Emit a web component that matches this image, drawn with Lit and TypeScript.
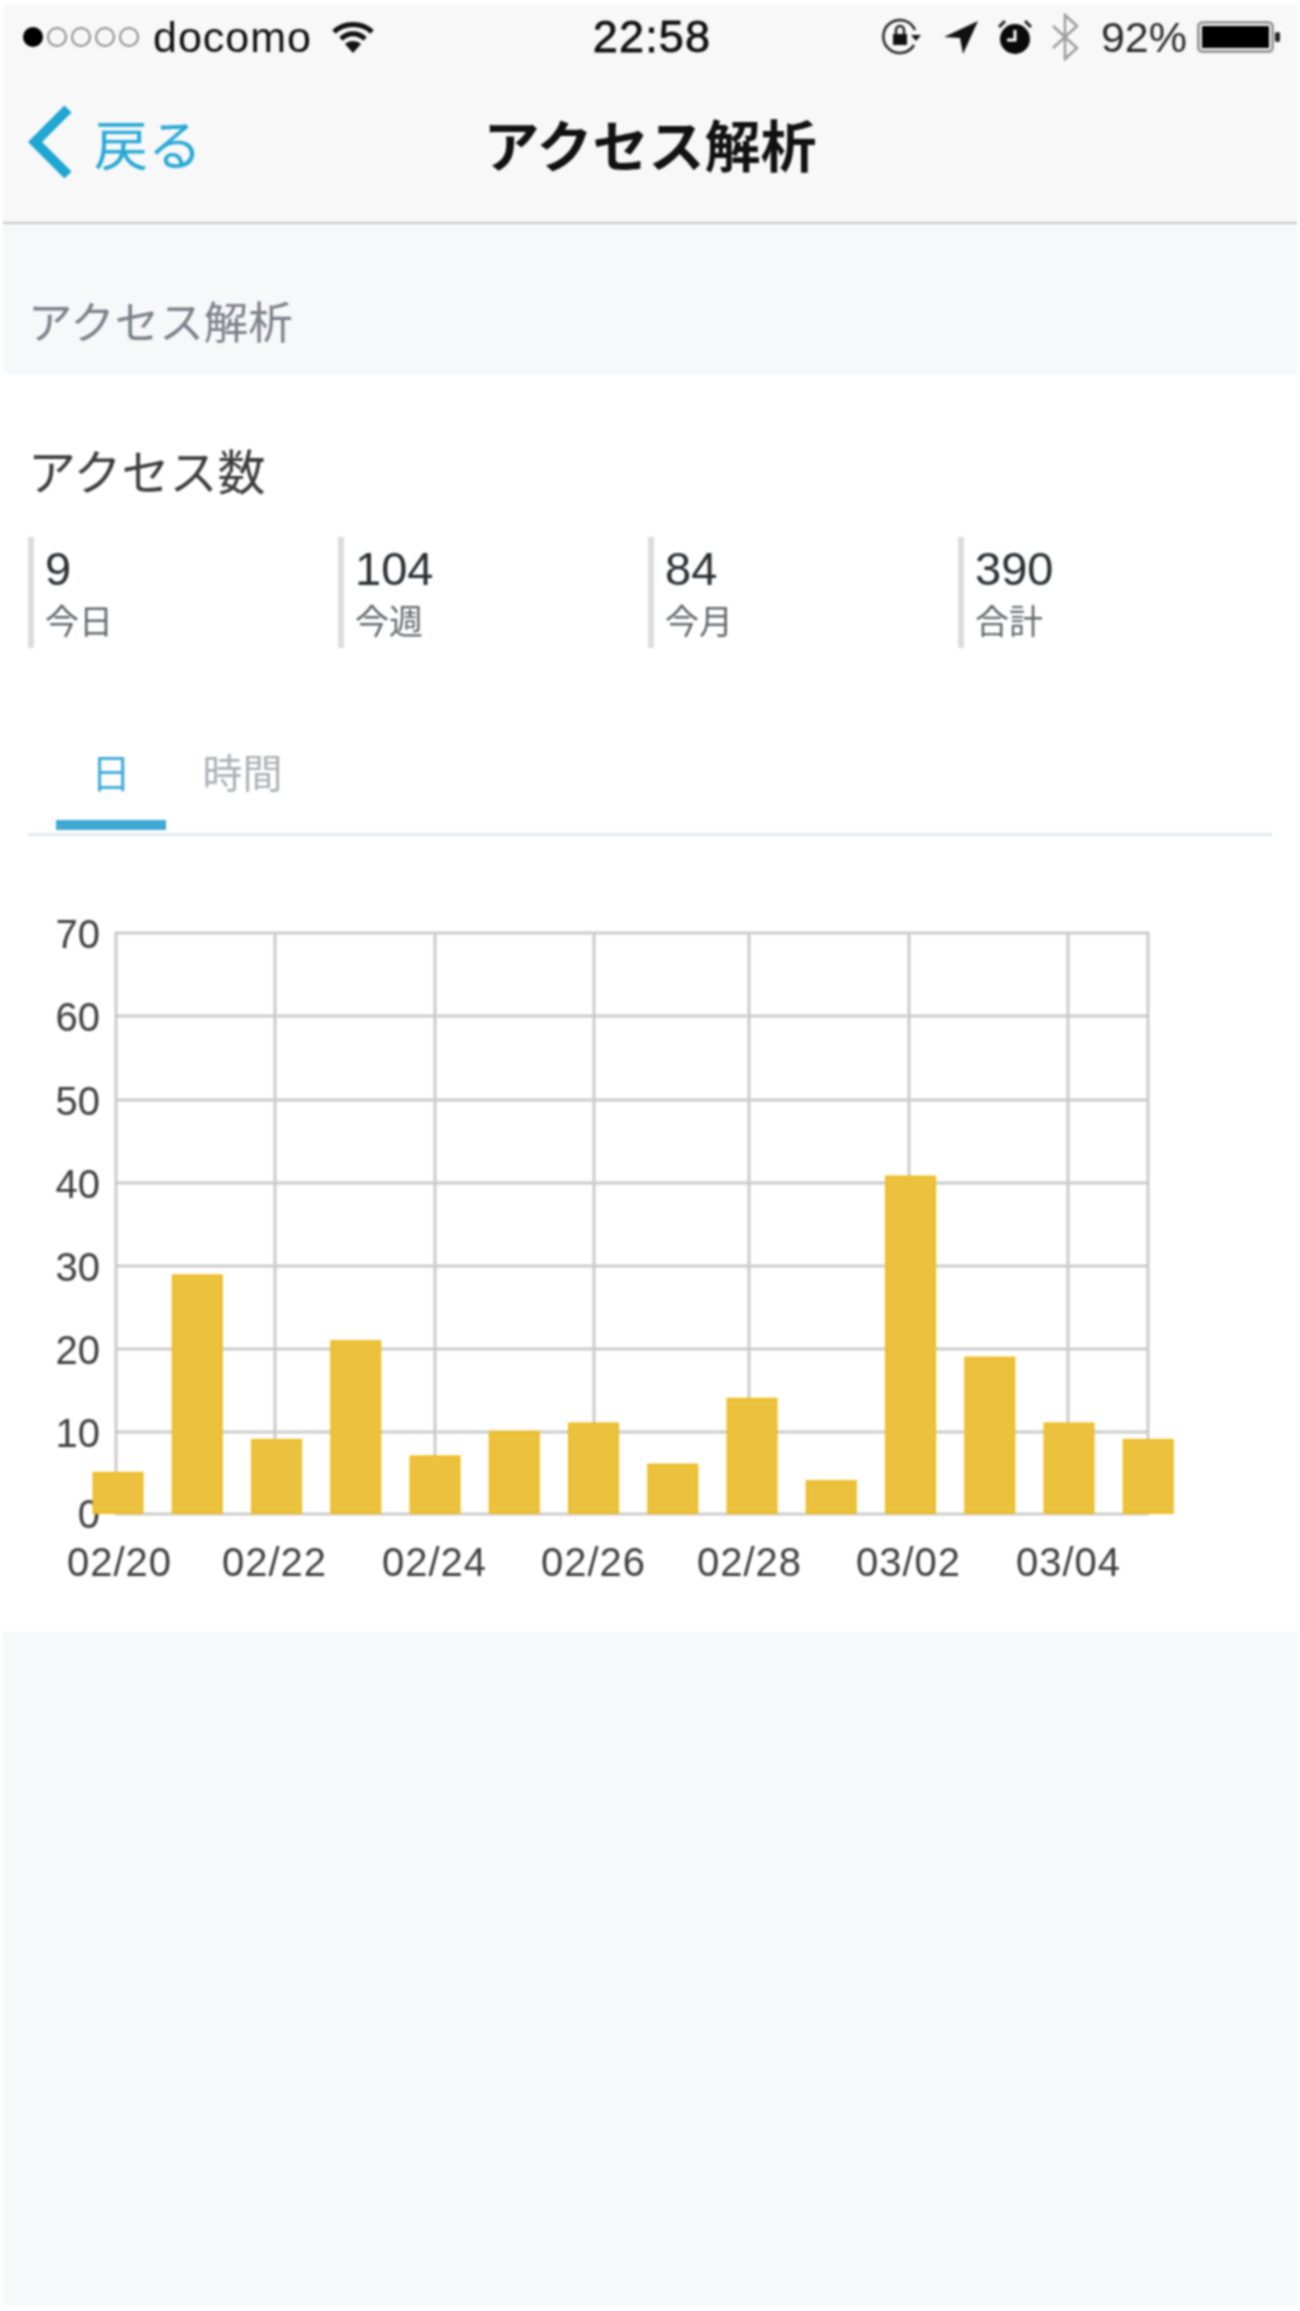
import { LitElement, html, css, svg } from 'lit'
import { customElement } from 'lit/decorators.js'

const BASE_Y = 1514
const UNIT = 8.23
const BAR_W = 51
const values = [5, 29, 9, 21, 7, 10, 11, 6, 14, 4, 41, 19, 11, 9]
const gridX = [116, 275, 435, 594, 749, 909, 1068, 1148]
const gridY = [933, 1016, 1100, 1183, 1266, 1349, 1432]
const xLabels = [
  ['02/20', 119],
  ['02/22', 274],
  ['02/24', 434],
  ['02/26', 593],
  ['02/28', 749],
  ['03/02', 908],
  ['03/04', 1068],
] as const
const stats = [
  ['9', '今日'],
  ['104', '今週'],
  ['84', '今月'],
  ['390', '合計'],
]

@customElement('app-root')
export class AppRoot extends LitElement {
  static styles = css`
    :host {
      display: block;
      height: 2311px;
      background: #fff;
      font-family: 'Liberation Sans', 'Noto Sans CJK JP', sans-serif;
    }

    .frame {
      padding: 4px 3px 5px;
      display: flex;
      flex-direction: column;
      height: 2302px;
      filter: blur(1px);
    }

    .top {
      height: 218px;
      box-sizing: content-box;
      background: #f8f8f8;
      border-bottom: 2px solid #c6c6c6;
      flex: none;
    }

    .status {
      height: 66px;
      display: grid;
      grid-template-columns: 1fr auto 1fr;
      align-items: center;
      font-size: 42px;
      color: #111;
    }

    .status-left,
    .status-right {
      display: flex;
      align-items: center;
    }

    .status-left {
      padding-left: 20px;
    }

    .status-right {
      justify-content: flex-end;
      padding-right: 16px;
    }

    .dots {
      display: flex;
      gap: 4px;
      margin-right: 14px;
    }

    .dot {
      width: 16px;
      height: 16px;
      border: 2px solid #8a8a8a;
      border-radius: 50%;
    }

    .dot.on {
      background: #000;
      border-color: #000;
    }

    .carrier {
      font-size: 43px;
      letter-spacing: 1px;
      margin-right: 20px;
    }

    .time {
      font-size: 45px;
      font-weight: 500;
      letter-spacing: 1.2px;
      margin-left: 4px;
      -webkit-text-stroke: 0.8px #111;
    }

    .pct {
      font-size: 43px;
      margin: 0 10px 0 22px;
      color: #2a2a2a;
    }

    .nav {
      height: 152px;
      display: grid;
      grid-template-columns: 1fr auto 1fr;
      align-items: center;
      padding-bottom: 8px;
      box-sizing: border-box;
    }

    .back {
      display: flex;
      align-items: center;
      padding-left: 25px;
      color: #29a9d6;
      font-size: 54px;
      gap: 22px;
    }

    .nav-title {
      font-size: 56px;
      font-weight: 700;
      color: #111;
    }

    .section-label {
      height: 150px;
      flex: none;
      box-sizing: border-box;
      padding: 69px 0 0 25px;
      font-size: 44.5px;
      line-height: 62px;
      color: #7a8088;
      background: #f7f8fa;
    }

    .card {
      height: 1258px;
      flex: none;
      background: #fff;
      padding: 65px 25px 0;
      box-sizing: border-box;
    }

    .card-title {
      font-size: 48px;
      line-height: 70px;
      color: #3c3c3c;
    }

    .stats {
      margin-top: 28px;
      display: grid;
      grid-template-columns: 310px 310px 310px 1fr;
    }

    .stat {
      height: 111px;
      border-left: 6px solid #dcdcdc;
      padding-left: 11px;
      box-sizing: border-box;
    }

    .stat-num {
      font-size: 47px;
      line-height: 60px;
      margin-top: 2px;
      color: #2a2d32;
    }

    .stat-label {
      font-size: 34px;
      line-height: 46px;
      color: #62676d;
    }

    .tabs {
      margin-top: 82px;
      height: 106px;
      box-sizing: border-box;
      border-bottom: 3px solid #e5e9ec;
      display: flex;
      padding-left: 28px;
      font-size: 40px;
    }

    .tab {
      height: 100px;
      box-sizing: border-box;
      padding-top: 19px;
      line-height: 50px;
      width: 110px;
      text-align: center;
      color: #aab0b5;
    }

    .tab.active {
      color: #43acd8;
      border-bottom: 10px solid #3fa9d3;
    }

    .tab + .tab {
      margin-left: 36px;
      width: 81px;
    }

    .chart {
      display: block;
      margin: 0 -25px;
    }

    .chart text {
      font-size: 40px;
      fill: #3e3e3e;
      font-family: 'Liberation Sans', sans-serif;
    }

    .grid-line {
      stroke: #cbcbcb;
      stroke-width: 3;
    }

    .bar {
      fill: #ecc13e;
      stroke: #edbd22;
      stroke-width: 2;
    }

    .rest {
      flex: 1;
      background: #f7f8fa;
    }
  `

  private renderChart() {
    return html`
      <svg class="chart" width="1294" height="796" viewBox="3 836 1294 796">
        ${gridX.map(x => svg`<line class="grid-line" x1=${x} x2=${x} y1="932" y2=${BASE_Y}></line>`)}
        ${gridY.map(y => svg`<line class="grid-line" x1="115" x2="1149" y1=${y} y2=${y}></line>`)}
        <line class="grid-line" x1="115" x2="1149" y1=${BASE_Y} y2=${BASE_Y}></line>
        ${gridY.map((y, i) => svg`<text x="100" y=${y + 15} text-anchor="end">${70 - i * 10}</text>`)}
        <text x="100" y="1528" text-anchor="end">0</text>
        ${values.map((v, i) => svg`
          <rect class="bar" x=${93.5 + i * 79.25} y=${BASE_Y - v * UNIT} width=${BAR_W - 2} height=${v * UNIT - 1}></rect>
        `)}
        ${xLabels.map(([t, x]) => svg`<text x=${x} y="1576" text-anchor="middle" textLength="104">${t}</text>`)}
      </svg>
    `
  }

  render() {
    return html`
      <div class="frame">
        <div class="top">
          <div class="status">
            <div class="status-left">
              <div class="dots">
                <div class="dot on"></div>
                <div class="dot"></div>
                <div class="dot"></div>
                <div class="dot"></div>
                <div class="dot"></div>
              </div>
              <span class="carrier">docomo</span>
              <svg width="42" height="32" viewBox="0 0 42 32" fill="none" stroke="#111" stroke-width="5">
                <path d="M2 11 C12 1 30 1 40 11"></path>
                <path d="M9 18 C16 11 26 11 33 18"></path>
                <path d="M21 32 L13 23 C17 19 25 19 29 23 Z" fill="#111" stroke="none"></path>
              </svg>
            </div>
            <div class="time">22:58</div>
            <div class="status-right">
              <svg width="40" height="38" viewBox="0 0 40 38" fill="none" style="margin-right:22px">
                <path d="M32 27 A16.500 16.500 0 1 1 33 12" stroke="#222" stroke-width="2.500"></path>
                <path d="M29 17 H39 L34 23 Z" fill="#111"></path>
                <rect x="11" y="16" width="14" height="11" fill="#111"></rect>
                <path d="M14 16 V12 A4 4 0 0 1 22 12 V16" stroke="#222" stroke-width="2.500"></path>
              </svg>
              <svg width="34" height="34" viewBox="0 0 34 34" style="margin-right:19px">
                <path d="M34 1 L0 17 L16 18 L19 34 Z" fill="#111"></path>
              </svg>
              <svg width="36" height="36" viewBox="0 0 36 36" style="margin-right:18px">
                <circle cx="18" cy="20" r="15" fill="#0a0a0a"></circle>
                <path d="M18 11 V21 H10" stroke="#fff" stroke-width="3" fill="none"></path>
                <path d="M2 8 L8 2 M34 8 L28 2" stroke="#222" stroke-width="3"></path>
              </svg>
              <svg width="28" height="48" viewBox="0 0 28 48" fill="none" stroke="#9c9c9c" stroke-width="2.500">
                <path d="M2 13 L26 35 L14 46 V2 L26 13 L2 35"></path>
              </svg>
              <span class="pct">92%</span>
              <svg width="84" height="32" viewBox="0 0 84 32">
                <rect x="1.500" y="1.500" width="74" height="29" rx="4" fill="none" stroke="#9a9a9a" stroke-width="3"></rect>
                <rect x="5" y="5" width="67" height="22" fill="#000"></rect>
                <rect x="78" y="11" width="5" height="10" rx="2" fill="#222"></rect>
              </svg>
            </div>
          </div>
          <div class="nav">
            <div class="back">
              <svg width="44" height="72" viewBox="0 0 44 72" fill="none" stroke="#1fa6d3" stroke-width="10">
                <path d="M40 3 L7 36 L40 69"></path>
              </svg>
              <span>戻る</span>
            </div>
            <div class="nav-title">アクセス解析</div>
            <div></div>
          </div>
        </div>
        <div class="section-label">アクセス解析</div>
        <div class="card">
          <div class="card-title">アクセス数</div>
          <div class="stats">
            ${stats.map(([num, label]) => html`
              <div class="stat">
                <div class="stat-num">${num}</div>
                <div class="stat-label">${label}</div>
              </div>
            `)}
          </div>
          <div class="tabs">
            <div class="tab active">日</div>
            <div class="tab">時間</div>
          </div>
          ${this.renderChart()}
        </div>
        <div class="rest"></div>
      </div>
    `
  }
}

declare global {
  interface HTMLElementTagNameMap {
    'app-root': AppRoot
  }
}
